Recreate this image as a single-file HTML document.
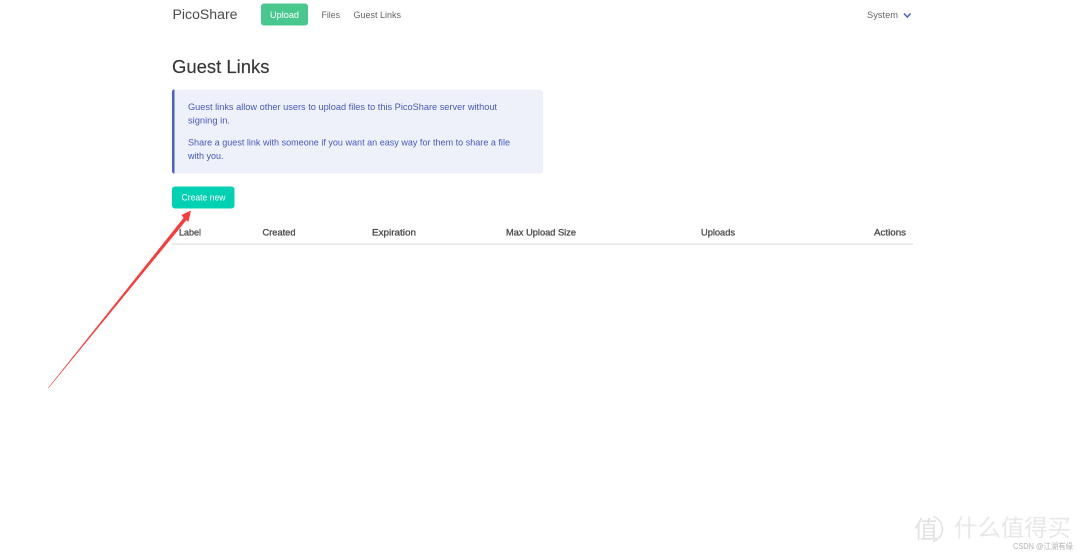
<!DOCTYPE html>
<html lang="zh">
<head>
<meta charset="utf-8">
<title>PicoShare - Guest Links</title>
<style>
html,body{margin:0;padding:0;background:#fff}
body{width:1080px;height:554px;overflow:hidden;position:relative}
svg{position:absolute;left:0;top:0;display:block}
text{font-family:"Liberation Sans","Noto Sans CJK SC",sans-serif}
</style>
</head>
<body>
<svg width="1080" height="554" viewBox="0 0 1080 554" xmlns="http://www.w3.org/2000/svg">
  <g style="filter:blur(.35px)">
    <text x="172.500" y="19" font-size="13.500" fill="#4a4a4a" textLength="65" lengthAdjust="spacingAndGlyphs">PicoShare</text>
    <rect x="261" y="3.500" width="47" height="22" rx="3" fill="#48c78e"/>
    <text x="270" y="17.800" font-size="9.500" fill="#fff" textLength="29" lengthAdjust="spacingAndGlyphs">Upload</text>
    <text x="321.500" y="17.800" font-size="9.500" fill="#666" textLength="18.500" lengthAdjust="spacingAndGlyphs">Files</text>
    <text x="353.500" y="17.800" font-size="9.500" fill="#666" textLength="47.500" lengthAdjust="spacingAndGlyphs">Guest Links</text>
    <text x="867" y="17.800" font-size="9.500" fill="#666" textLength="31" lengthAdjust="spacingAndGlyphs">System</text>
    <path d="M904 13.500 L907.300 17 L910.600 13.500" fill="none" stroke="#485fc7" stroke-width="1.500"/>

    <text x="172" y="73" font-size="18" fill="#363636" stroke="#363636" stroke-width=".15" textLength="97.500" lengthAdjust="spacingAndGlyphs">Guest Links</text>

    <rect x="172" y="89.500" width="371" height="84" rx="3" fill="#eff1fa"/>
    <path d="M174.500 89.500 Q172 89.500 172 92 V171 Q172 173.500 174.500 173.500 Z" fill="#485fc7"/>
    <g font-size="9.500" fill="#4458c0">
      <text x="188" y="110" textLength="309" lengthAdjust="spacingAndGlyphs">Guest links allow other users to upload files to this PicoShare server without</text>
      <text x="188" y="123.500" textLength="42" lengthAdjust="spacingAndGlyphs">signing in.</text>
      <text x="188" y="145.500" textLength="322" lengthAdjust="spacingAndGlyphs">Share a guest link with someone if you want an easy way for them to share a file</text>
      <text x="188" y="159" textLength="35.500" lengthAdjust="spacingAndGlyphs">with you.</text>
    </g>

    <rect x="172" y="186.500" width="62.500" height="22" rx="3" fill="#00d1b2"/>
    <text x="181.500" y="200.500" font-size="9.500" fill="#fff" textLength="44" lengthAdjust="spacingAndGlyphs">Create new</text>

    <g font-size="9.500" fill="#4a4a4a" stroke="#4a4a4a" stroke-width=".3">
      <text x="179" y="235.500" textLength="22" lengthAdjust="spacingAndGlyphs">Label</text>
      <text x="262.500" y="235.500" textLength="33" lengthAdjust="spacingAndGlyphs">Created</text>
      <text x="372" y="235.500" textLength="44" lengthAdjust="spacingAndGlyphs">Expiration</text>
      <text x="506" y="235.500" textLength="70" lengthAdjust="spacingAndGlyphs">Max Upload Size</text>
      <text x="701" y="235.500" textLength="34" lengthAdjust="spacingAndGlyphs">Uploads</text>
      <text x="874" y="235.500" textLength="32" lengthAdjust="spacingAndGlyphs">Actions</text>
    </g>
    <rect x="172" y="243.500" width="741" height="1.200" fill="#dfdfdf"/>

    <path d="M48 388 L183.600 217.900 L181.500 215 L191 210.500 L188.300 222 L186.400 220.100 L48.400 388.300 Z" fill="#fb3a3a"/>

    <text x="914" y="538" font-size="24" fill="#e2e2e2">值</text>
    <path d="M933 516.500 A13 13 0 0 1 933 541.500" fill="none" stroke="#e2e2e2" stroke-width="1.500"/>
    <text x="954" y="536" font-size="23.500" fill="#e8e8e8" textLength="117" lengthAdjust="spacing">什么值得买</text>
    <text x="1013" y="549" font-size="8" fill="#b4b4b4" textLength="60" lengthAdjust="spacingAndGlyphs">CSDN @江湖有缘</text>
  </g>
</svg>
</body>
</html>
